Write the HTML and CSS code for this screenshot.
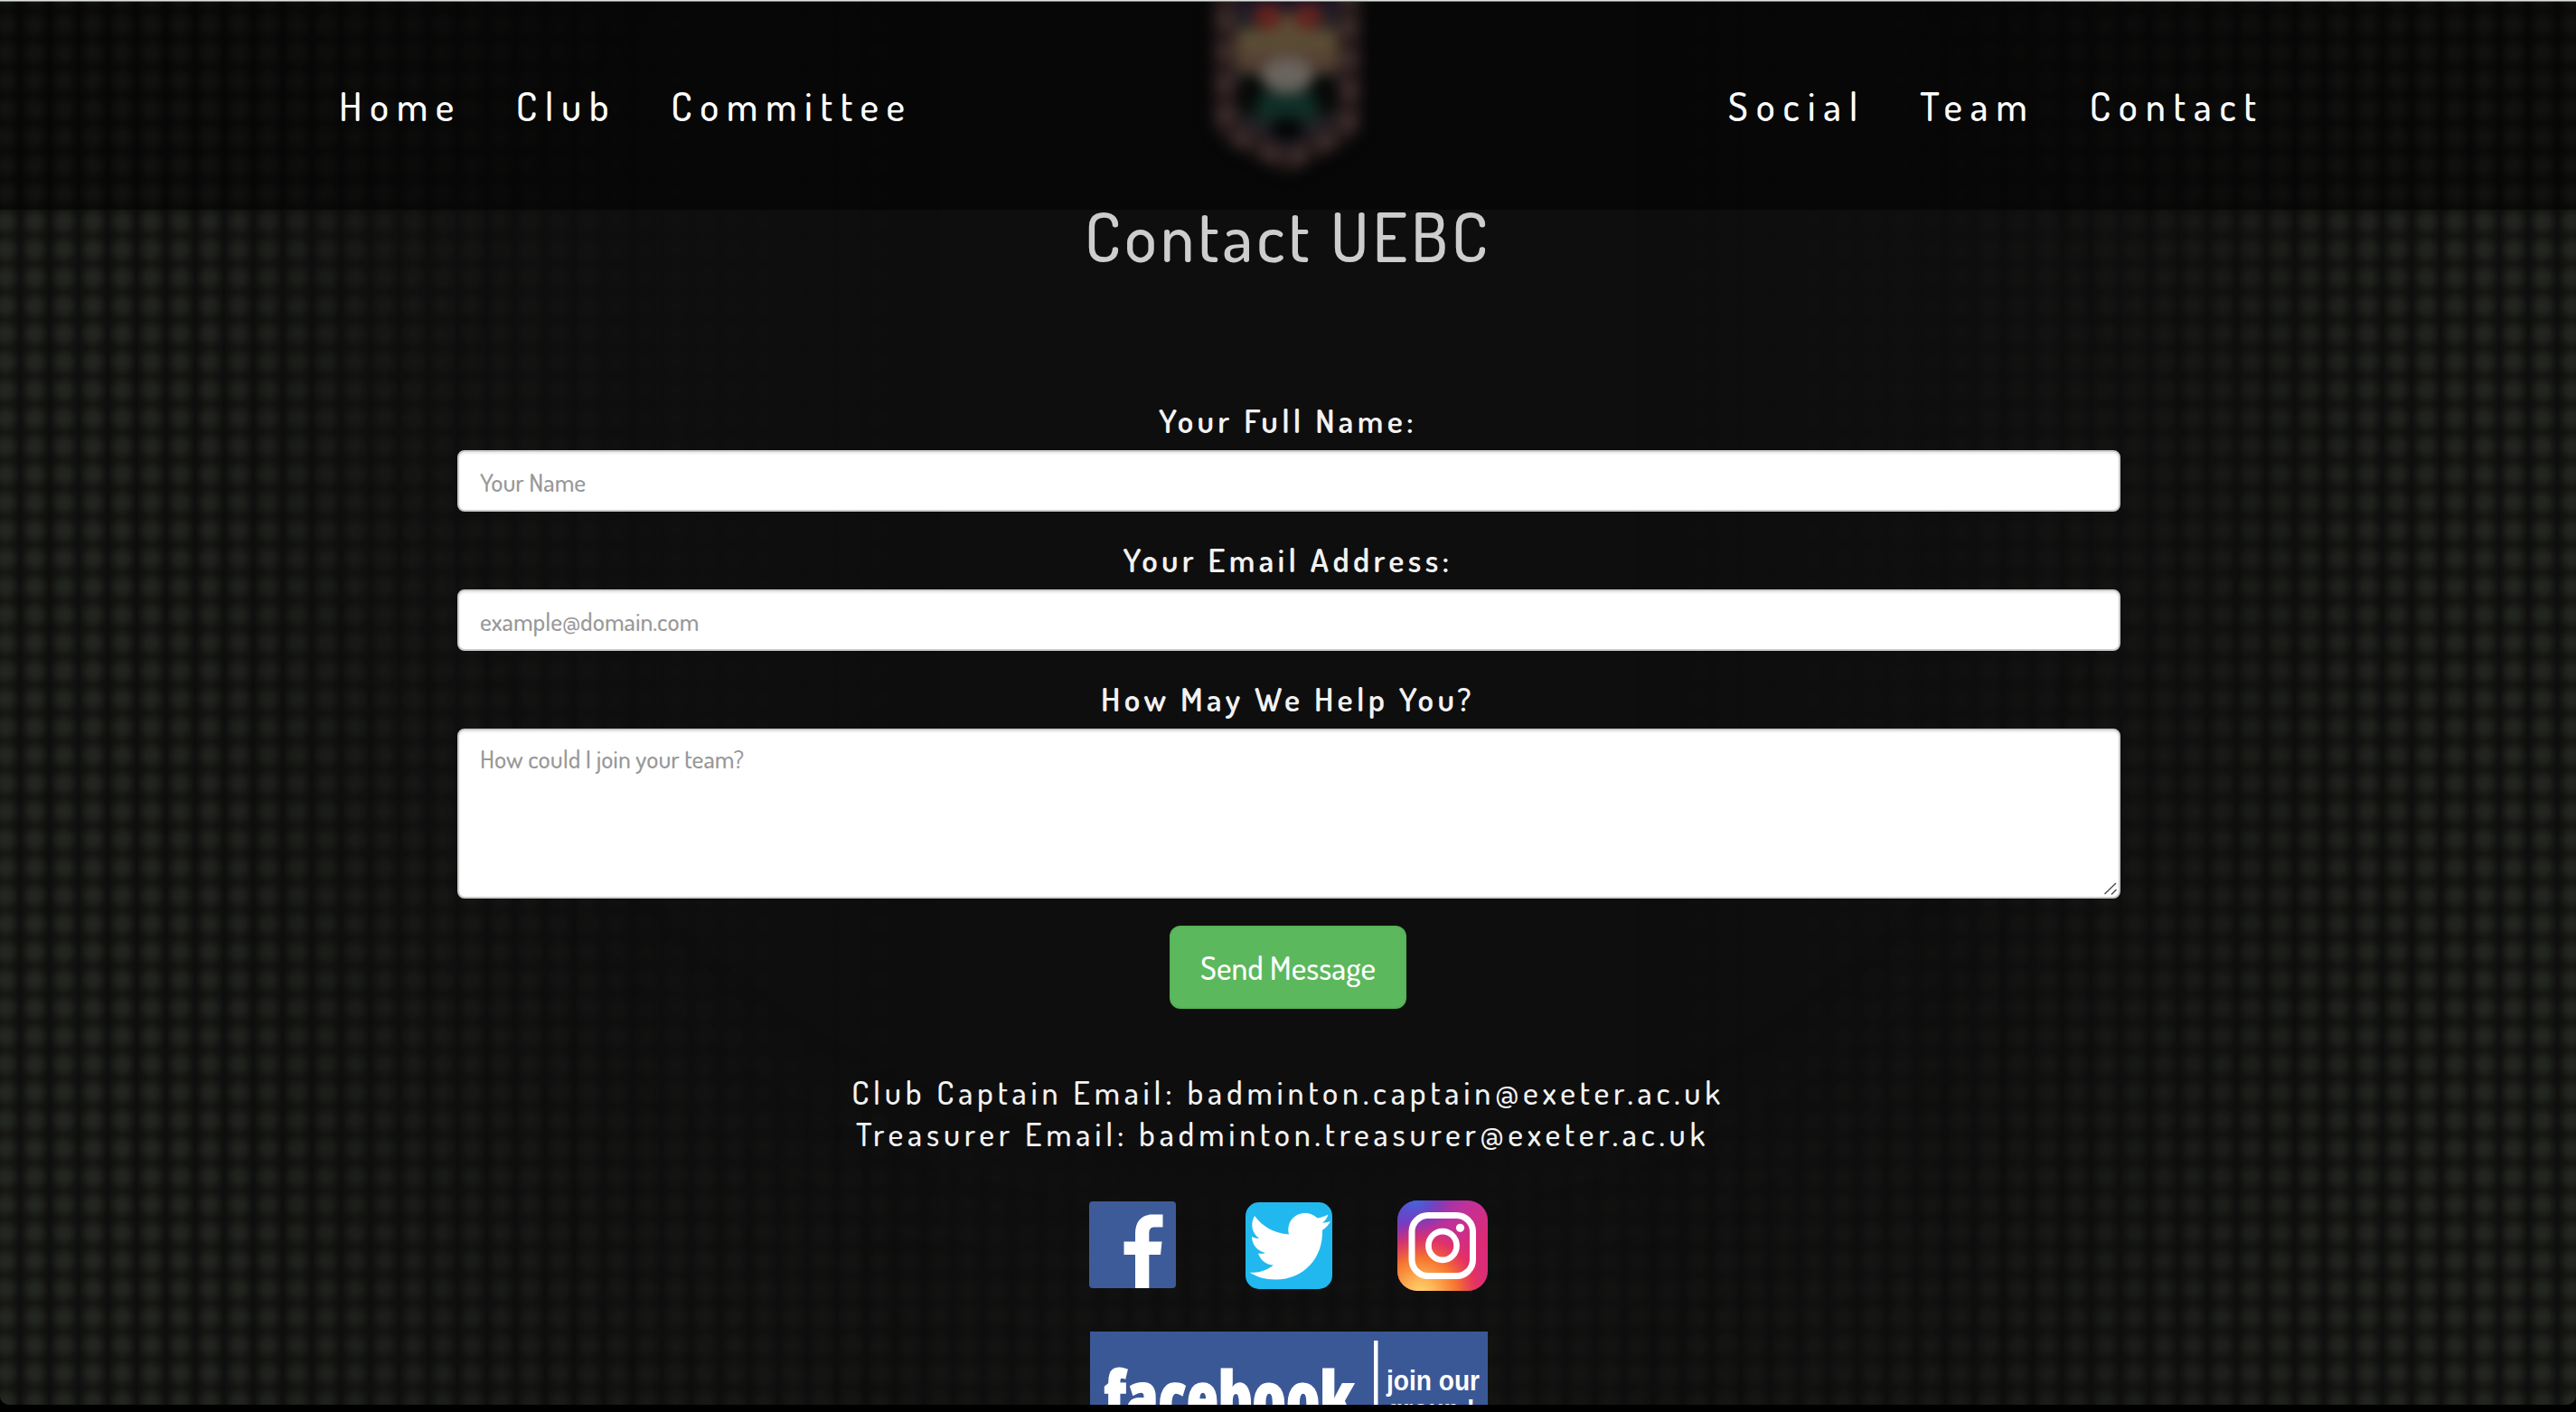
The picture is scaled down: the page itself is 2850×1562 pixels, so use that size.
FILE: index.html
```html
<!DOCTYPE html>
<html lang="en">
<head>
<meta charset="utf-8">
<title>Contact UEBC</title>
<link rel="stylesheet" href="styles.css">
</head>
<body>
<div class="page">
  <div class="dots dots-edge"></div>
  <div class="dots dots-low"></div>

  <svg class="crest" width="220" height="240" viewBox="0 0 220 240">
    <path d="M29 -20H191V132Q191 150 174 160L110 193L46 160Q29 150 29 132Z" fill="#4a2f33"/>
    <path d="M41 -15H179V130Q179 146 163 155L110 182L57 155Q41 146 41 130Z" fill="none" stroke="#84635f" stroke-width="17" stroke-dasharray="20 15"/>
    <path d="M54 -20H166V128Q166 140 154 146L110 168L66 146Q54 140 54 128Z" fill="#47434a"/>
    <path d="M54 -20H166V10H54Z" fill="#33254c"/>
    <path d="M54 34H80L100 18H120L140 34H166V80L110 84L54 80Z" fill="#b59a6a"/>
    <circle cx="89" cy="20" r="15" fill="#c8453a"/>
    <circle cx="133" cy="20" r="15" fill="#c8453a"/>
    <ellipse cx="110" cy="70" rx="54" ry="11" fill="#a87a68"/>
    <ellipse cx="72" cy="108" rx="18" ry="23" fill="#0c110d"/>
    <ellipse cx="149" cy="108" rx="18" ry="23" fill="#0c110d"/>
    <ellipse cx="110" cy="120" rx="36" ry="20" fill="#205c4c"/>
    <ellipse cx="110" cy="85" rx="29" ry="20" fill="#d3c9bb"/>
    <ellipse cx="110" cy="145" rx="19" ry="13" fill="#08080c"/>
  </svg>

  <header class="nav">
    <nav class="nav-group"><a>Home</a><a>Club</a><a>Committee</a></nav>
    <nav class="nav-group"><a>Social</a><a>Team</a><a>Contact</a></nav>
  </header>

  <main class="content">
    <h1 class="title">Contact UEBC</h1>
    <form class="form">
      <label class="label" for="name">Your Full Name:</label>
      <input class="field" id="name" type="text" placeholder="Your Name">
      <label class="label" for="email">Your Email Address:</label>
      <input class="field" id="email" type="text" placeholder="example@domain.com">
      <label class="label" for="msg">How May We Help You?</label>
      <div class="area-wrap">
        <textarea class="field area" id="msg" placeholder="How could I join your team?"></textarea>
        <svg class="grip" width="16" height="16" viewBox="0 0 16 16"><path d="M1.5 14L14 2M9 14.5L14.5 9" fill="none" stroke="#555" stroke-width="1.6"/></svg>
      </div>
      <button class="send" type="button">Send Message</button>
    </form>

    <div class="emails">
      <p>Club Captain Email: badminton.captain@exeter.ac.uk</p>
      <p class="treasurer">Treasurer Email: badminton.treasurer@exeter.ac.uk</p>
    </div>

    <div class="social">
      <svg class="fb" width="96" height="96" viewBox="0 0 96 96">
        <rect width="96" height="96" rx="4" fill="#3d5b98"/>
        <path d="M51 96V59H38.5V44.500H51V36C51 22 58 14.500 70 14.500H81.500V28.500H73C67.500 28.500 66.300 31 66.300 36V44.500H80.500L79 59H66.300V96Z" fill="#fff"/>
      </svg>
      <svg class="tw" width="96" height="96" viewBox="0 0 96 96">
        <rect width="96" height="96" rx="15" fill="#21b8ef"/>
        <path d="M10 15C19 27 32 34.500 48 35.500C45 22 54 12 66 12C72 12 76.500 14.500 79.500 17.500C83.500 17 87.500 15.500 91.500 13.500C90 18 88 20.500 85 23C88.500 22.500 91 22 94 21C92 25 89 28 85 31C86 61 65 85.500 33 85.500C22 85.500 12 82.500 4.500 77.500C14.500 78.500 23 75.500 31 69.500C23 69.500 16.500 64 14 56.500C17 57 19.500 57 22 56C13 54 7 46.500 7 38C9.500 39.500 12.500 40 15 40C7 34 5 24 10 15Z" fill="#fff"/>
      </svg>
      <svg class="ig" width="100" height="100" viewBox="0 0 100 100">
        <defs>
          <linearGradient id="ig-base" x1="0" y1="0" x2="1" y2=".9">
            <stop offset="0" stop-color="#5a4fd0"/><stop offset=".2" stop-color="#8236b8"/><stop offset=".45" stop-color="#c0319a"/><stop offset=".75" stop-color="#dd2a75"/><stop offset="1" stop-color="#d92e78"/>
          </linearGradient>
          <radialGradient id="ig-warm" cx=".26" cy="1.04" r=".82">
            <stop offset="0" stop-color="#ffd874"/><stop offset=".2" stop-color="#fdb555"/><stop offset=".5" stop-color="#f5732f"/><stop offset=".75" stop-color="#e8345a" stop-opacity=".75"/><stop offset="1" stop-color="#d02c85" stop-opacity="0"/>
          </radialGradient>
          <radialGradient id="ig-blue" cx=".2" cy="-.02" r=".38">
            <stop offset="0" stop-color="#3f6be0"/><stop offset="1" stop-color="#5b45cc" stop-opacity="0"/>
          </radialGradient>
        </defs>
        <rect width="100" height="100" rx="22" fill="url(#ig-base)"/>
        <rect width="100" height="100" rx="22" fill="url(#ig-blue)"/>
        <rect width="100" height="100" rx="22" fill="url(#ig-warm)"/>
        <rect x="16" y="16.500" width="67.500" height="67" rx="18" fill="none" stroke="#fff" stroke-width="7"/>
        <ellipse cx="50" cy="50" rx="15.600" ry="15.900" fill="none" stroke="#fff" stroke-width="6.600"/>
        <circle cx="69.500" cy="30.300" r="4.600" fill="#fff"/>
      </svg>
    </div>

    <svg class="banner" width="440" height="110" viewBox="0 0 440 110">
      <rect width="440" height="110" fill="#3b5896"/>
      <text class="banner-logo" x="16" y="102" textLength="276" lengthAdjust="spacingAndGlyphs">facebook</text>
      <rect x="314" y="10" width="4.500" height="100" fill="#fff"/>
      <text class="banner-note" x="328" y="65" textLength="103" lengthAdjust="spacingAndGlyphs">join our</text>
      <text class="banner-note" x="329" y="97" textLength="97" lengthAdjust="spacingAndGlyphs">group !</text>
    </svg>
  </main>
</div>
</body>
</html>
```
FILE: styles.css
```css
* { box-sizing: border-box; }

html, body {
  margin: 0;
  height: 100%;
  overflow: hidden;
  background: #000;
}

body {
  font-family: Dosis, "Open Sans", sans-serif;
  font-weight: 500;
  color: #f2f2f2;
}

.page {
  position: relative;
  height: 1554px;
  overflow: hidden;
  border-radius: 0 0 10px 10px;
  background: #0e0e0e;
}

/* Soft halftone backdrop, fading out towards the middle of the page */
.dots {
  position: absolute;
  inset: 0;
  background-image:
    radial-gradient(circle 20px, #242822 0%, rgba(35, 38, 32, .9) 30%, rgba(31, 33, 28, .6) 55%, rgba(24, 25, 21, .25) 78%, rgba(16, 16, 16, 0) 100%),
    linear-gradient(90deg, #0e0e0e, #171815 50%, #0e0e0e);
  background-size: 32.28px 31.08px;
  background-position: 22.3px 12px;
}
.dots-edge {
  -webkit-mask-image: linear-gradient(90deg, #000 0, rgba(0,0,0,.8) 220px, rgba(0,0,0,.35) 440px, rgba(0,0,0,.08) 700px, transparent 1050px, transparent 1800px, rgba(0,0,0,.08) 2150px, rgba(0,0,0,.35) 2410px, rgba(0,0,0,.8) 2630px, #000 2850px);
}
.dots-low {
  -webkit-mask-image: radial-gradient(ellipse 1500px 1300px at 50% 500px, transparent 60%, rgba(0,0,0,.5) 100%);
}

.crest {
  position: absolute;
  left: 1314px;
  top: -2px;
  overflow: visible;
  filter: blur(8px);
}

.nav {
  position: relative;
  height: 232px;
  padding: 88px 345px 0 375px;
  display: flex;
  justify-content: space-between;
  background: rgba(0, 0, 0, .5);
  border-top: 1px solid #dbe0dd;
  box-shadow: inset 0 1px #7b817e;
}
.nav-group {
  display: flex;
  gap: 60px;
  font-size: 44px;
  line-height: 56px;
  letter-spacing: 8.600px;
  color: #fff;
}
.nav-group + .nav-group {
  letter-spacing: 8.800px;
}

.content {
  position: relative;
  display: flex;
  flex-direction: column;
  align-items: center;
  margin-top: -13px;
}

.title {
  margin: 0 0 142px;
  font-size: 75px;
  line-height: 84px;
  font-weight: 500;
  letter-spacing: 4px;
  color: #cdcdcd;
}

.form {
  width: 1840px;
  display: flex;
  flex-direction: column;
  align-items: center;
  margin-left: 2px;
}
.label {
  margin: 0 2px 13px 0;
  font-size: 36px;
  line-height: 40px;
  font-weight: 600;
  letter-spacing: 4.350px;
}
.field {
  display: block;
  width: 100%;
  height: 68px;
  margin: 0 0 33px;
  padding: 2px 24px 0 23px;
  border: 2px solid #ccc;
  border-radius: 8px;
  background: #fff;
  box-shadow: inset 0 2px 2px rgba(0, 0, 0, .075);
  font: 500 27.600px/40px Dosis, "Open Sans", sans-serif;
  outline: 0;
}
.field::placeholder { color: #999; opacity: 1; }
.area-wrap {
  position: relative;
  width: 100%;
}
.area {
  height: 188px;
  margin: 0 0 30px;
  padding: 12px 23px 11px;
  resize: none;
}
.grip {
  position: absolute;
  right: 3px;
  top: 169px;
}
.send {
  width: 262px;
  height: 92px;
  margin-right: 2px;
  padding: 0;
  border: 2px solid #56b356;
  border-radius: 12px;
  background: #5cb85c;
  color: #fff;
  font: 500 35.500px/48px Dosis, "Open Sans", sans-serif;
}

.emails {
  margin-top: 69px;
  font-size: 36px;
  line-height: 46px;
  letter-spacing: 4.800px;
  text-align: center;
}
.emails p { margin: 0; }
.emails .treasurer { padding-right: 12px; }

.social {
  display: flex;
  align-items: center;
  width: 441px;
  margin: 51px 0 45px;
}
.social svg { flex: none; }
.fb { margin-top: -2px; }
.tw { margin: 0 72px 0 77px; }
.banner { display: block; margin-left: 2px; }

.banner-logo {
  font: 800 79px "Open Sans", sans-serif;
  font-stretch: 75%;
  fill: #fff;
  stroke: #fff;
  stroke-width: 1.5px;
}
.banner-note {
  font: 700 31px "Liberation Sans", sans-serif;
  fill: #fff;
}
```
